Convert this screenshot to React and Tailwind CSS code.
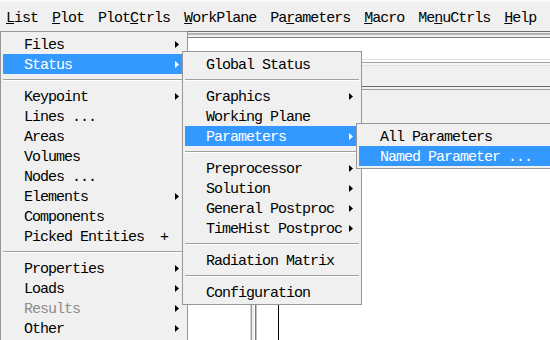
import React from "react";

const menuBar = [
  ["", "L", "ist"],
  ["", "P", "lot"],
  ["Plot", "C", "trls"],
  ["", "W", "orkPlane"],
  ["Pa", "r", "ameters"],
  ["", "M", "acro"],
  ["Me", "n", "uCtrls"],
  ["", "H", "elp"],
];

const listMenu = [
  { label: "Files", arrow: true },
  { label: "Status", arrow: true, active: true },
  { sep: true },
  { label: "Keypoint", arrow: true },
  { label: "Lines ..." },
  { label: "Areas" },
  { label: "Volumes" },
  { label: "Nodes ..." },
  { label: "Elements", arrow: true },
  { label: "Components" },
  { label: "Picked Entities  +" },
  { sep: true },
  { label: "Properties", arrow: true },
  { label: "Loads", arrow: true },
  { label: "Results", arrow: true, disabled: true },
  { label: "Other", arrow: true },
];

const statusMenu = [
  { label: "Global Status" },
  { sep: true },
  { label: "Graphics", arrow: true },
  { label: "Working Plane" },
  { label: "Parameters", arrow: true, active: true },
  { sep: true },
  { label: "Preprocessor", arrow: true },
  { label: "Solution", arrow: true },
  { label: "General Postproc", arrow: true },
  { label: "TimeHist Postproc", arrow: true },
  { sep: true },
  { label: "Radiation Matrix" },
  { sep: true },
  { label: "Configuration" },
];

const paramMenu = [
  { label: "All Parameters" },
  { label: "Named Parameter ...", active: true },
];

const Arrow = ({ white }) => (
  <svg width="4" height="7" viewBox="0 0 4 7" className="mt-[3px]">
    <path d="M0 0L4 3.5L0 7Z" fill={white ? "#ffffff" : "#000000"} />
  </svg>
);

const MenuItem = ({ item }) => {
  if (item.sep) {
    return (
      <div className="h-[12px] pt-[5px]">
        <div className="h-[1px] bg-[#a0a0a0]" />
        <div className="h-[1px] bg-white" />
      </div>
    );
  }
  return (
    <div
      className={`h-[20px] flex items-start justify-between pt-[4px] pl-[21px] pr-[6px] ${
        item.active ? "bg-[#3399ff] text-white" : item.disabled ? "text-[#8d8d8d]" : "text-black"
      }`}
    >
      <span className="whitespace-pre leading-[16px]">{item.label}</span>
      {item.arrow && <Arrow white={item.active} />}
    </div>
  );
};

const Menu = ({ items, className }) => (
  <div className={`absolute bg-[#f0f0f0] border border-[#979797] p-[2px] ${className}`}>
    {items.map((item, i) => (
      <MenuItem key={i} item={item} />
    ))}
  </div>
);

const App = () => {
  return (
    <div className="relative w-[550px] h-[340px] overflow-hidden bg-white font-['Liberation_Mono',monospace] text-[15px] tracking-[-1px] text-black">
      {/* menu bar */}
      <div className="h-[31px] bg-[#f0f0f0] border-t-2 border-[#fafafa] flex gap-[14px] pl-[6px] pt-[9px]">
        {menuBar.map(([a, u, b], i) => (
          <span key={i} className="whitespace-pre leading-[16px]">
            {a}
            <span className="underline underline-offset-1">{u}</span>
            {b}
          </span>
        ))}
      </div>

      {/* rules under menu bar */}
      <div className="bg-[#f0f0f0]">
        <div className="h-[1px] bg-[#6e6e6e]" />
        <div className="h-[1px]" />
        <div className="h-[2px] bg-[#b4b4b4]" />
        <div className="h-[2px]" />
        <div className="h-[1px] bg-[#7e7e7e]" />
      </div>

      {/* command input */}
      <div className="h-[21px] bg-white" />

      {/* toolbar */}
      <div className="h-[31px] bg-[#f0f0f0] flex flex-col">
        <div className="h-[1px] bg-[#e3e3e3]" />
        <div className="h-[2px] bg-white" />
        <div className="h-[1px] bg-[#a0a0a0]" />
        <div className="h-[2px] bg-[#f7f7f7]" />
        <div className="h-[1px] bg-[#e0e0e0]" />
        <div className="flex-1" />
        <div className="h-[1px] bg-[#6a6a6a]" />
        <div className="h-[2px]" />
        <div className="h-[1px] bg-[#a0a0a0]" />
      </div>

      <div className="h-[50px] bg-[#f0f0f0]" />

      {/* graphics area */}
      <div className="h-[200px] flex">
        <div className="w-[250px] bg-white" />
        <div className="w-[7px] flex">
          <div className="w-[1px] bg-[#cfcfcf]" />
          <div className="w-[1px] bg-[#a0a0a0]" />
          <div className="w-[2px] bg-[#ececec]" />
          <div className="w-[1px] bg-white" />
          <div className="w-[1px] bg-[#7a7a7a]" />
          <div className="w-[1px] bg-[#c0c0c0]" />
        </div>
        <div className="w-[21px] bg-white" />
        <div className="w-[1px] bg-black" />
        <div className="flex-1 bg-white" />
      </div>

      {/* open menus */}
      <Menu items={listMenu} className="left-0 top-[31px] w-[188px]" />
      <Menu items={statusMenu} className="left-[182px] top-[51px] w-[180px]" />
      <Menu items={paramMenu} className="left-[356px] top-[123px] w-[210px]" />
    </div>
  );
};

export default App;
